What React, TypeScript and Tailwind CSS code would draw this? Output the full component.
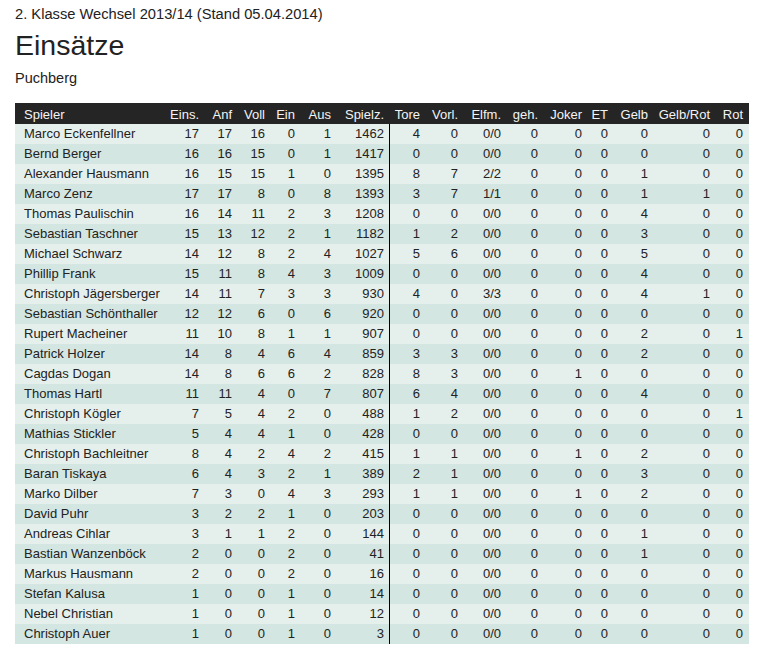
import React from 'react';

type Row = [string, number, number, number, number, number, number, number, number, string, number, number, number, number, number, number];

const headers = ['Spieler', 'Eins.', 'Anf', 'Voll', 'Ein', 'Aus', 'Spielz.', 'Tore', 'Vorl.', 'Elfm.', 'geh.', 'Joker', 'ET', 'Gelb', 'Gelb/Rot', 'Rot'];

// Einsatzstatistik Puchberg
const rows: Row[] = [
  ['Marco Eckenfellner', 17, 17, 16, 0, 1, 1462, 4, 0, '0/0', 0, 0, 0, 0, 0, 0],
  ['Bernd Berger', 16, 16, 15, 0, 1, 1417, 0, 0, '0/0', 0, 0, 0, 0, 0, 0],
  ['Alexander Hausmann', 16, 15, 15, 1, 0, 1395, 8, 7, '2/2', 0, 0, 0, 1, 0, 0],
  ['Marco Zenz', 17, 17, 8, 0, 8, 1393, 3, 7, '1/1', 0, 0, 0, 1, 1, 0],
  ['Thomas Paulischin', 16, 14, 11, 2, 3, 1208, 0, 0, '0/0', 0, 0, 0, 4, 0, 0],
  ['Sebastian Taschner', 15, 13, 12, 2, 1, 1182, 1, 2, '0/0', 0, 0, 0, 3, 0, 0],
  ['Michael Schwarz', 14, 12, 8, 2, 4, 1027, 5, 6, '0/0', 0, 0, 0, 5, 0, 0],
  ['Phillip Frank', 15, 11, 8, 4, 3, 1009, 0, 0, '0/0', 0, 0, 0, 4, 0, 0],
  ['Christoph Jägersberger', 14, 11, 7, 3, 3, 930, 4, 0, '3/3', 0, 0, 0, 4, 1, 0],
  ['Sebastian Schönthaller', 12, 12, 6, 0, 6, 920, 0, 0, '0/0', 0, 0, 0, 0, 0, 0],
  ['Rupert Macheiner', 11, 10, 8, 1, 1, 907, 0, 0, '0/0', 0, 0, 0, 2, 0, 1],
  ['Patrick Holzer', 14, 8, 4, 6, 4, 859, 3, 3, '0/0', 0, 0, 0, 2, 0, 0],
  ['Cagdas Dogan', 14, 8, 6, 6, 2, 828, 8, 3, '0/0', 0, 1, 0, 0, 0, 0],
  ['Thomas Hartl', 11, 11, 4, 0, 7, 807, 6, 4, '0/0', 0, 0, 0, 4, 0, 0],
  ['Christoph Kögler', 7, 5, 4, 2, 0, 488, 1, 2, '0/0', 0, 0, 0, 0, 0, 1],
  ['Mathias Stickler', 5, 4, 4, 1, 0, 428, 0, 0, '0/0', 0, 0, 0, 0, 0, 0],
  ['Christoph Bachleitner', 8, 4, 2, 4, 2, 415, 1, 1, '0/0', 0, 1, 0, 2, 0, 0],
  ['Baran Tiskaya', 6, 4, 3, 2, 1, 389, 2, 1, '0/0', 0, 0, 0, 3, 0, 0],
  ['Marko Dilber', 7, 3, 0, 4, 3, 293, 1, 1, '0/0', 0, 1, 0, 2, 0, 0],
  ['David Puhr', 3, 2, 2, 1, 0, 203, 0, 0, '0/0', 0, 0, 0, 0, 0, 0],
  ['Andreas Cihlar', 3, 1, 1, 2, 0, 144, 0, 0, '0/0', 0, 0, 0, 1, 0, 0],
  ['Bastian Wanzenböck', 2, 0, 0, 2, 0, 41, 0, 0, '0/0', 0, 0, 0, 1, 0, 0],
  ['Markus Hausmann', 2, 0, 0, 2, 0, 16, 0, 0, '0/0', 0, 0, 0, 0, 0, 0],
  ['Stefan Kalusa', 1, 0, 0, 1, 0, 14, 0, 0, '0/0', 0, 0, 0, 0, 0, 0],
  ['Nebel Christian', 1, 0, 0, 1, 0, 12, 0, 0, '0/0', 0, 0, 0, 0, 0, 0],
  ['Christoph Auer', 1, 0, 0, 1, 0, 3, 0, 0, '0/0', 0, 0, 0, 0, 0, 0],
];

const grid =
  'grid grid-cols-[150px_40px_33px_33px_30px_36px_53px_36px_38px_43px_37px_44px_26px_40px_62px_33px]';

const App: React.FC = () => {
  return (
    <div className="min-h-[652px] bg-white px-[15px] pt-[4px] font-['Liberation_Sans',Arial,sans-serif] text-[#222]">
      <p className="text-[14.7px] leading-[20px]">2. Klasse Wechsel 2013/14 (Stand 05.04.2014)</p>
      <h1 className="mt-[4px] text-[28.5px] leading-[34px]">Einsätze</h1>
      <p className="mt-[6px] text-[14.5px] leading-[20px]">Puchberg</p>

      {/* Tabelle */}
      <div className="mt-[15px] w-[734px] text-[13px]">
        <div className={`${grid} h-[21px] bg-[#252525] text-[#f4f4f4] leading-[23px]`}>
          {headers.map((h, i) => (
            <div key={h} className={i === 0 ? 'pl-[9px]' : 'pr-[6px] text-right'}>
              {h}
            </div>
          ))}
        </div>

        {rows.map((r, idx) => (
          <div
            key={r[0]}
            className={`${grid} h-[20px] leading-[20px] ${idx % 2 === 0 ? 'bg-[#e5f0ed]' : 'bg-[#d3e6e1]'}`}
          >
            {r.map((v, i) => (
              <div
                key={i}
                className={
                  i === 0
                    ? 'pl-[9px] whitespace-nowrap'
                    : i === 6
                      ? 'border-r border-black pr-[5px] text-right'
                      : 'pr-[6px] text-right'
                }
              >
                {v}
              </div>
            ))}
          </div>
        ))}
      </div>
    </div>
  );
};

export default App;
